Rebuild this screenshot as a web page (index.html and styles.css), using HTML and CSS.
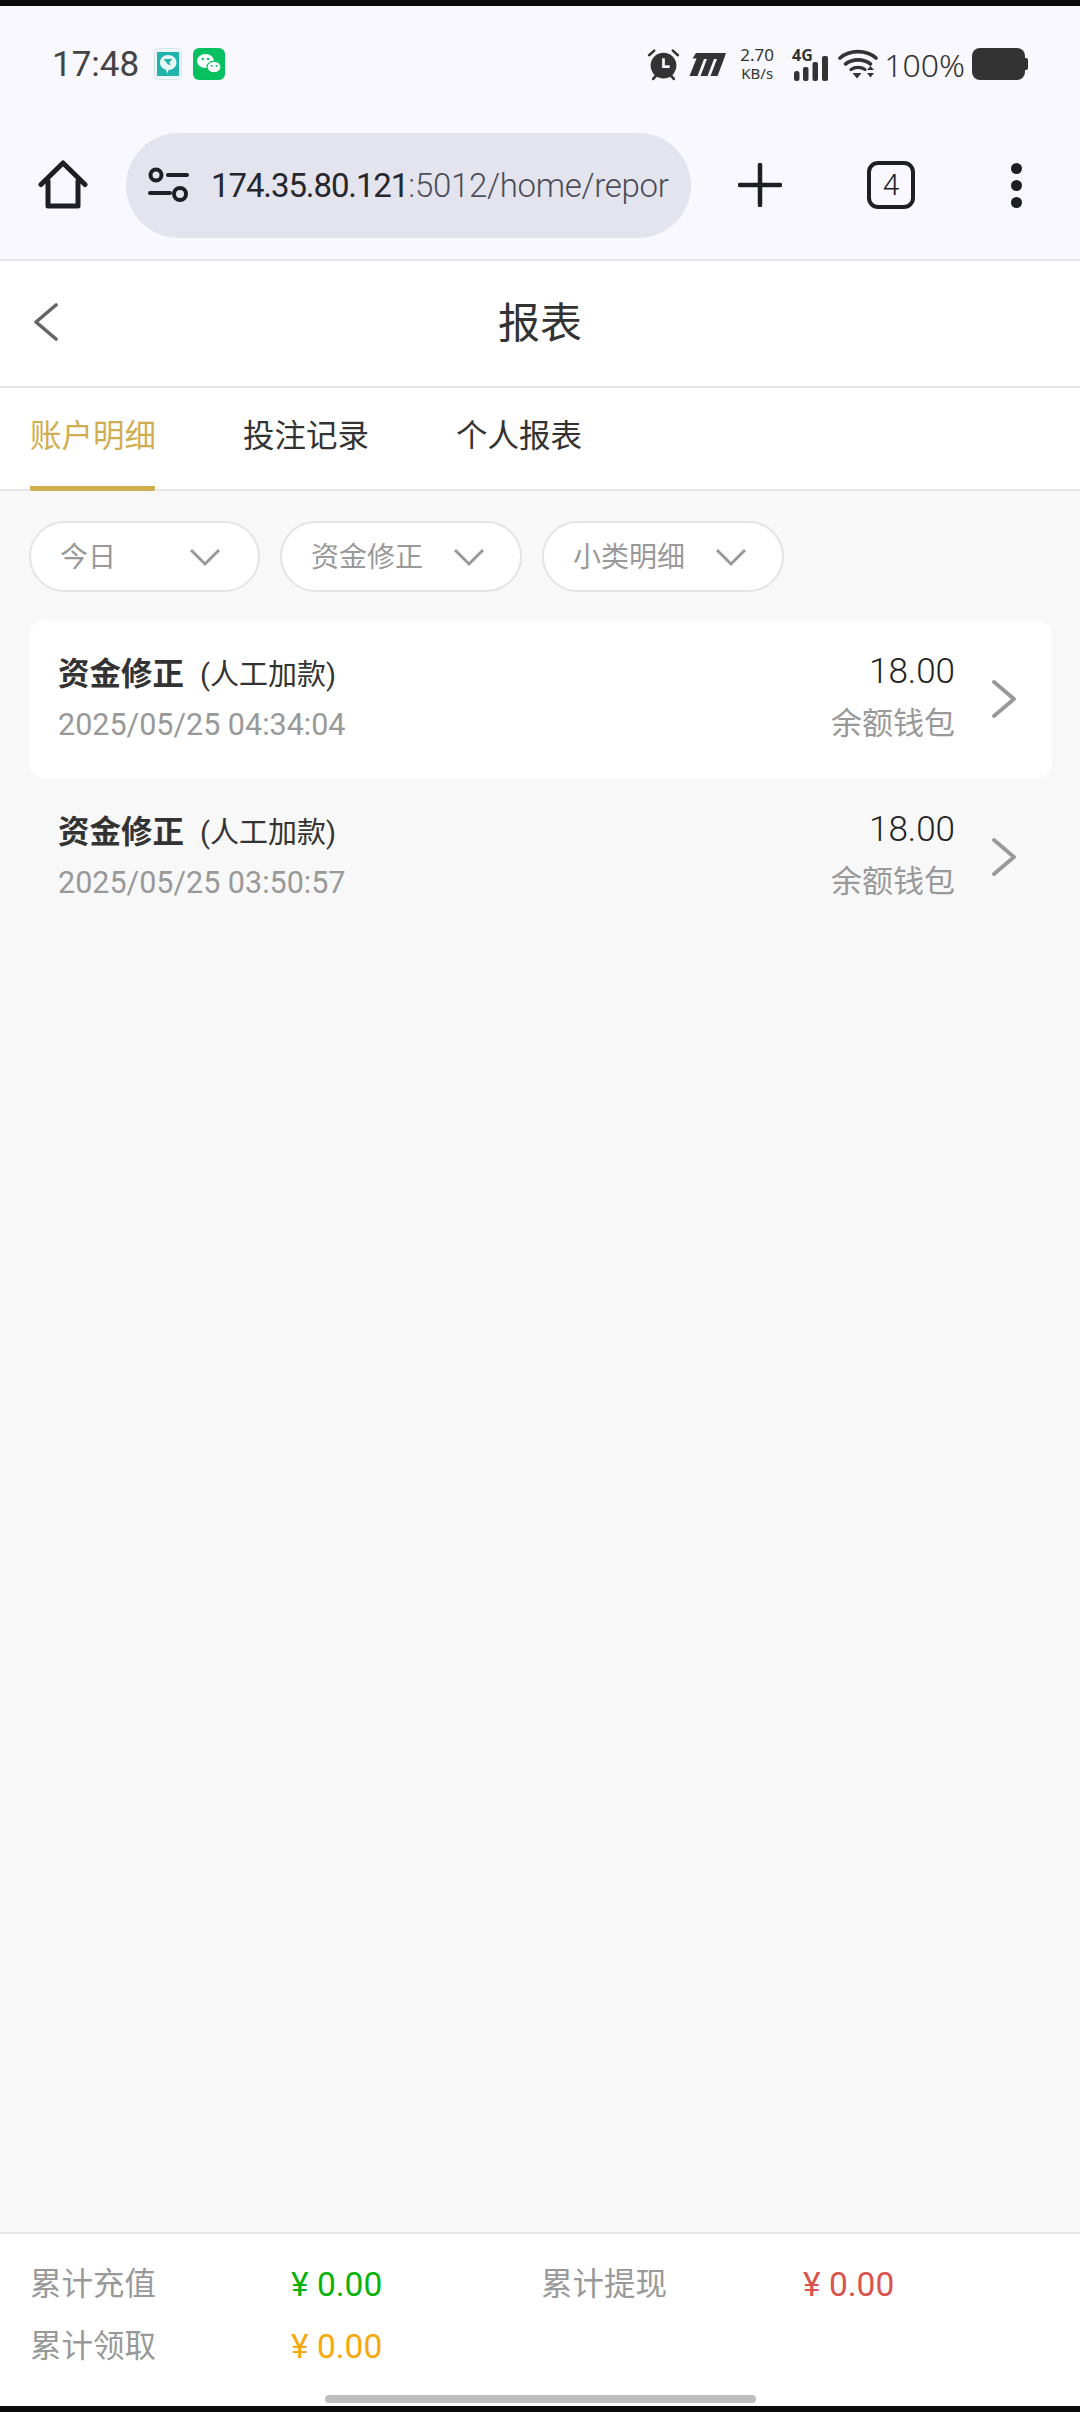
FILE: index.html
```html
<!DOCTYPE html>
<html>

<head>
    <meta charset="utf-8">
    <title>报表</title>
    <link rel="stylesheet" href="styles.css">
</head>

<body>

<div class="phone">

    <!-- android status bar -->
    <div class="status_bar">
        <span class="time">17:48</span>
        <svg class="app_icon first" viewBox="0 0 28 32">
            <rect x="0.5" y="0.5" width="27" height="31" rx="4" fill="#eef7f8" stroke="#d5e6ea"/>
            <rect x="3" y="4" width="22" height="24" fill="#1fb3ab"/>
            <path d="M14 7c5 0 8.500 3.200 8.500 7.500 0 4.200-3.500 7.500-8 7.500l-1 3.500-2-4c-3.300-1-5.500-3.700-5.500-7 0-4.300 3.500-7.500 8-7.500z" fill="#e6f6f5"/>
            <path d="M9.500 11h9l-3 3 1 3.500-3-1.500-1.500-2z" fill="#1fb3ab"/>
        </svg>
        <svg class="app_icon" viewBox="0 0 32 32">
            <rect width="32" height="32" rx="6" fill="#07c160"/>
            <ellipse cx="12.500" cy="13" rx="8.500" ry="7" fill="#fff"/>
            <ellipse cx="21" cy="19" rx="7" ry="5.800" fill="#fff" stroke="#07c160" stroke-width="1.200"/>
            <circle cx="9.800" cy="11" r="1.200" fill="#07c160"/>
            <circle cx="15" cy="11" r="1.200" fill="#07c160"/>
            <circle cx="18.700" cy="18" r="1" fill="#07c160"/>
            <circle cx="23.500" cy="18" r="1" fill="#07c160"/>
        </svg>
        <div class="status_right">
            <svg class="st_alarm" viewBox="0 0 32 32">
                <circle cx="16" cy="17" r="12.500" fill="#333"/>
                <path d="M16 10v8h6" fill="none" stroke="#f8f8fe" stroke-width="2.600"/>
                <path d="M2 7l5-4.500M30 7l-5-4.500" stroke="#333" stroke-width="2.400" stroke-linecap="round"/>
                <path d="M6 30l3-3.500M26 30l-3-3.500" stroke="#333" stroke-width="2.600" stroke-linecap="round"/>
            </svg>
            <svg class="st_logo" viewBox="0 0 37 24">
                <path d="M7 1h30l-1.500 4.500-7 18.500h-7l6.500-17h-3l-6.500 17h-7l6.500-17h-3l-6.500 17h-8l7-17.500h-4z" fill="#333"/>
            </svg>
            <div class="st_speed"><span>2.70</span><span class="unit">KB/s</span></div>
            <svg class="st_signal" viewBox="0 0 37 40">
                <text x="0" y="17" class="st_4g">4G</text>
                <rect x="2" y="27" width="5.500" height="10" rx="2.500" fill="#333"/>
                <rect x="11" y="23" width="5.500" height="14" rx="2" fill="#333"/>
                <rect x="20.500" y="18" width="5.500" height="19" rx="2" fill="#333"/>
                <rect x="30" y="12" width="6" height="25" rx="2" fill="#333"/>
            </svg>
            <svg class="st_wifi" viewBox="0 0 40 32">
                <path d="M2 10c10-8.500 26-8.500 36 0" fill="none" stroke="#333" stroke-width="3.600" stroke-linecap="round"/>
                <path d="M7.500 16c7-5.500 18-5.500 25 0" fill="none" stroke="#333" stroke-width="3.600" stroke-linecap="round"/>
                <path d="M13 21.500c4-2.800 10-2.800 14 0" fill="none" stroke="#333" stroke-width="3.200" stroke-linecap="round"/>
                <path d="M14.500 25h9l-4.500 5.500z" fill="#333"/>
                <path d="M29 22l3.500-4 3.500 4zM29 25h7l-3.500 4.500z" fill="#333"/>
            </svg>
            <span class="st_percent">100%</span>
            <div class="battery"></div>
        </div>
    </div>

    <!-- browser toolbar -->
    <div class="toolbar">
        <svg class="home_icon" viewBox="0 0 50 50">
            <path d="M3 24.500L25 3l22 21.500M10 21v25h30V21" fill="none" stroke="#1e1f25" stroke-width="5" stroke-linecap="round" stroke-linejoin="round"/>
        </svg>
        <div class="url_pill">
            <svg class="tune_icon" viewBox="0 0 42 36">
                <circle cx="8" cy="8" r="5.500" fill="none" stroke="#1e1f25" stroke-width="4"/>
                <path d="M20 8h19M2 26h20" stroke="#1e1f25" stroke-width="4" stroke-linecap="round"/>
                <circle cx="32" cy="27" r="6" fill="none" stroke="#1e1f25" stroke-width="4"/>
            </svg>
            <div class="url_text"><span class="host">174.35.80.121</span>:5012/home/repor</div>
        </div>
        <svg class="plus_icon" viewBox="0 0 44 44">
            <path d="M22 2v40M2 22h40" stroke="#1e1f25" stroke-width="4.500" stroke-linecap="round"/>
        </svg>
        <div class="tab_count">4</div>
        <div class="dots"><i></i><i></i><i></i></div>
    </div>

    <!-- page -->
    <div class="page_head">
        <svg class="back_icon" viewBox="0 0 26 38">
            <path d="M23 2L3 19l20 17" fill="none" stroke="#666" stroke-width="3.600" stroke-linecap="round" stroke-linejoin="round"/>
        </svg>
        <h1 class="page_title">报表</h1>
    </div>

    <div class="tabs">
        <div class="tab active">账户明细</div>
        <div class="tab">投注记录</div>
        <div class="tab">个人报表</div>
    </div>

    <div class="content">
        <div class="filters">
            <div class="filter filter_day">
                <span>今日</span>
                <svg viewBox="0 0 32 20"><path d="M2 3l14 14L30 3" fill="none" stroke="#999" stroke-width="3"/></svg>
            </div>
            <div class="filter">
                <span>资金修正</span>
                <svg viewBox="0 0 32 20"><path d="M2 3l14 14L30 3" fill="none" stroke="#999" stroke-width="3"/></svg>
            </div>
            <div class="filter">
                <span>小类明细</span>
                <svg viewBox="0 0 32 20"><path d="M2 3l14 14L30 3" fill="none" stroke="#999" stroke-width="3"/></svg>
            </div>
        </div>

        <div class="record white">
            <div class="rec_left">
                <div class="rec_title"><b>资金修正</b><span>(人工加款)</span></div>
                <div class="rec_date">2025/05/25 04:34:04</div>
            </div>
            <div class="rec_right">
                <div class="rec_amount">18.00</div>
                <div class="rec_wallet">余额钱包</div>
            </div>
            <svg class="rec_arrow" viewBox="0 0 26 38"><path d="M3 2l20 17L3 36" fill="none" stroke="#999" stroke-width="3.800" stroke-linecap="round" stroke-linejoin="round"/></svg>
        </div>

        <div class="record">
            <div class="rec_left">
                <div class="rec_title"><b>资金修正</b><span>(人工加款)</span></div>
                <div class="rec_date">2025/05/25 03:50:57</div>
            </div>
            <div class="rec_right">
                <div class="rec_amount">18.00</div>
                <div class="rec_wallet">余额钱包</div>
            </div>
            <svg class="rec_arrow" viewBox="0 0 26 38"><path d="M3 2l20 17L3 36" fill="none" stroke="#999" stroke-width="3.800" stroke-linecap="round" stroke-linejoin="round"/></svg>
        </div>
    </div>

    <div class="totals">
        <div class="totals_grid">
            <span class="t_label">累计充值</span>
            <span class="t_value green">¥ 0.00</span>
            <span class="t_label">累计提现</span>
            <span class="t_value red">¥ 0.00</span>
            <span class="t_label">累计领取</span>
            <span class="t_value orange">¥ 0.00</span>
        </div>
        <div class="handle"></div>
    </div>

</div>

</body>

</html>
```

FILE: styles.css
```css
* {
    margin: 0px;
    box-sizing: border-box;
}

body {
    font-family: Roboto, "Noto Sans CJK SC", sans-serif;
    background: #0b0b0b;
}

.phone {
    width: 1080px;
    height: 2412px;
    padding: 6px 0px;
    display: flex;
    flex-direction: column;
    background: #0b0b0b;
    overflow: hidden;
}

/* status bar */
.status_bar {
    height: 116px;
    display: flex;
    align-items: center;
    padding: 0px 55px 0px 52px;
    background: #f8f8fe;
    color: #333;
}

.time {
    font-size: 35px;
    color: #444;
    margin-right: 15px;
}

.app_icon {
    width: 32px;
    height: 32px;
    margin-right: 7px;
}

.app_icon.first {
    width: 28px;
    margin-right: 11px;
}

.status_right {
    margin-left: auto;
    display: flex;
    align-items: center;
}

.st_alarm {
    width: 33px;
    height: 33px;
    margin-right: 9px;
}

.st_logo {
    width: 37px;
    height: 24px;
    margin-right: 13px;
}

.st_speed {
    display: flex;
    flex-direction: column;
    align-items: center;
    width: 36px;
    font-family: "Noto Sans", sans-serif;
    font-size: 17px;
    line-height: 18px;
    margin-right: 17px;
}

.st_speed .unit {
    font-size: 15px;
}

.st_signal {
    width: 37px;
    height: 40px;
    margin-right: 9px;
}

.st_4g {
    font-family: "Noto Sans", sans-serif;
    font-size: 16px;
    font-weight: 700;
    fill: #333;
}

.st_wifi {
    width: 40px;
    height: 32px;
    margin-right: 6px;
}

.st_percent {
    font-family: "Noto Sans", sans-serif;
    font-size: 32px;
    font-weight: 300;
    margin-right: 7px;
}

.battery {
    position: relative;
    width: 53px;
    height: 32px;
    border-radius: 8px;
    background: #333;
}

.battery:after {
    content: "";
    position: absolute;
    right: -3px;
    top: 10px;
    width: 3px;
    height: 12px;
    border-radius: 0px 2px 2px 0px;
    background: #333;
}

/* browser toolbar */
.toolbar {
    height: 139px;
    display: flex;
    align-items: center;
    padding: 10px 0px 21px 38px;
    background: #f8f8fe;
    border-bottom: 2px solid #e2e2ea;
}

.home_icon {
    width: 50px;
    height: 50px;
    margin-right: 38px;
}

.url_pill {
    width: 565px;
    height: 105px;
    display: flex;
    align-items: center;
    padding: 0px 22px 0px 22px;
    border-radius: 53px;
    background: #e3e4ee;
}

.tune_icon {
    width: 42px;
    height: 36px;
    margin-right: 21px;
    flex-shrink: 0;
}

.url_text {
    font-size: 33px;
    letter-spacing: -0.3px;
    font-weight: 300;
    color: #4c4d57;
    white-space: nowrap;
}

.url_text .host {
    color: #26272d;
    font-weight: 400;
    letter-spacing: -1.1px;
}

.plus_icon {
    width: 44px;
    height: 44px;
    margin-left: 47px;
}

.tab_count {
    width: 48px;
    height: 48px;
    margin-left: 85px;
    border: 4px solid #1e1f25;
    border-radius: 11px;
    font-size: 30px;
    font-weight: 300;
    line-height: 40px;
    text-align: center;
    color: #1e1f25;
}

.dots {
    display: flex;
    flex-direction: column;
    gap: 6px;
    margin-left: 96px;
}

.dots i {
    display: block;
    width: 11px;
    height: 11px;
    border-radius: 50%;
    background: #1e1f25;
}

/* page header */
.page_head {
    position: relative;
    height: 127px;
    display: flex;
    align-items: center;
    justify-content: center;
    padding-bottom: 8px;
    background: #fff;
    border-bottom: 2px solid #e6e6e6;
}

.back_icon {
    position: absolute;
    left: 33px;
    top: 42px;
    width: 26px;
    height: 38px;
}

.page_title {
    font-size: 42px;
    font-weight: 400;
    color: #333;
}

.tabs {
    height: 103px;
    display: flex;
    gap: 88px;
    padding: 0px 30px;
    background: #fff;
    border-bottom: 2px solid #e6e6e6;
}

.tab {
    width: 125px;
    height: 103px;
    font-size: 31.5px;
    line-height: 98px;
    white-space: nowrap;
    color: #333;
}

.tab.active {
    color: #d0ae4f;
    border-bottom: 5px solid #d0ae4f;
    border-radius: 0px 0px 2px 2px;
}

/* filters and list */
.content {
    flex: 1;
    padding: 30px 28px 0px 29px;
    background: #f8f8f8;
}

.filters {
    display: flex;
    gap: 20px;
}

.filter {
    width: 242px;
    height: 71px;
    display: flex;
    align-items: center;
    justify-content: space-between;
    padding: 0px 35px 3px 29px;
    border: 2px solid #e4e4e4;
    border-radius: 36px;
    background: #fff;
    font-size: 28px;
    color: #999;
}

.filter_day {
    width: 231px;
    padding-right: 37px;
}

.filter svg {
    width: 32px;
    height: 20px;
    margin-top: 3px;
}

.record {
    height: 158px;
    display: flex;
    align-items: center;
    padding: 0px 35px 0px 29px;
    border-radius: 16px;
}

.filters + .record {
    margin-top: 28px;
}

.record.white {
    background: #fff;
}

.rec_left {
    flex: 1;
}

.rec_title {
    font-size: 29px;
    line-height: 44px;
    color: #333;
}

.rec_title b {
    font-size: 31.5px;
    font-weight: 700;
    margin-right: 16px;
}

.rec_date {
    margin-top: 7px;
    font-size: 30.5px;
    line-height: 42px;
    color: #999;
}

.rec_right {
    text-align: right;
    margin-right: 36px;
}

.rec_amount {
    font-size: 35px;
    font-weight: 300;
    line-height: 44px;
    color: #222;
    margin-top: -4px;
}

.rec_wallet {
    margin-top: 9px;
    font-size: 31px;
    line-height: 42px;
    color: #999;
}

.rec_arrow {
    width: 26px;
    height: 38px;
}

/* totals footer */
.totals {
    height: 174px;
    display: flex;
    flex-direction: column;
    background: #fff;
    border-top: 2px solid #e6e6e6;
}

.totals_grid {
    display: grid;
    grid-template-columns: 261px 250px 262px 1fr;
    row-gap: 18px;
    padding: 29px 30px 0px;
    font-size: 31.5px;
    line-height: 44px;
}

.t_label {
    color: #999;
}

.t_value {
    font-size: 33.5px;
}

.green {
    color: #0bb20c;
}

.red {
    color: #d9534f;
}

.orange {
    color: #f5a90c;
}

.handle {
    width: 431px;
    height: 8px;
    margin: auto auto 3px;
    border-radius: 4px;
    background: #bfbfbf;
}
```
